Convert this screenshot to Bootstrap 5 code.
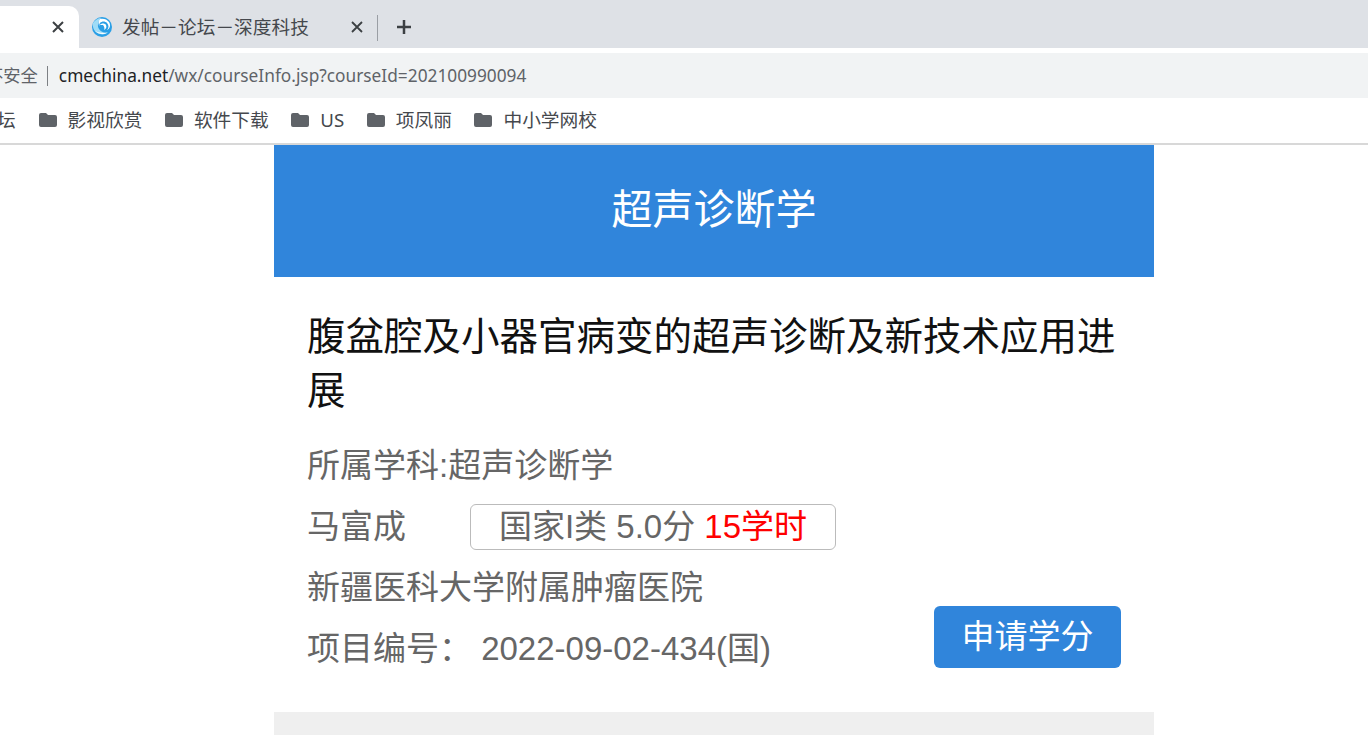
<!DOCTYPE html>
<html lang="zh">
<head>
    <meta charset="UTF-8">
    <title>超声诊断学</title>
    <link href="https://cdn.jsdelivr.net/npm/bootstrap@5.3.2/dist/css/bootstrap.min.css" rel="stylesheet">
    <style>
        html, body { height: 100%; overflow: hidden; }
        body { font-family: "Liberation Sans", "Noto Sans CJK SC", sans-serif; background: #fff; }
        .chrome-ui { font-family: "Noto Sans", "Noto Sans CJK SC", sans-serif; }
        .tabstrip { height: 48px; background: #dee1e6; }
        .tab-active { width: 79px; height: 42px; margin-top: 6px; background: #fff; border-top-right-radius: 10px; padding-right: 15px; }
        .tab-other { width: 298px; height: 42px; margin-top: 6px; padding-left: 13px; padding-right: 14px; font-size: 18.7px; color: #45484d; }
        .tab-other span { margin-left: 10px; }
        .tab-sep { width: 1px; height: 26px; background: #9a9ea4; margin-top: 15px; }
        .tab-plus { margin: 6px 0 0 18px; height: 42px; }
        .gapline { height: 5px; background: #fff; }
        .addressbar { height: 45px; background: #f1f3f4; font-size: 17.3px; color: #5f6368; white-space: nowrap; overflow: hidden; }
        .addr-lock { margin-left: -14px; }
        .addr-bar { width: 1px; height: 20px; background: #7d8084; margin: 0 11px 0 9px; }
        .addr-host { color: #202124; }
        .bookmarks { height: 45px; background: #fff; font-size: 18.7px; color: #45484d; white-space: nowrap; overflow: hidden; }
        .bm-cut { margin-left: -3px; width: 19px; overflow: hidden; }
        .bm-item { margin-left: 22.6px; gap: 11px; }
        .bm-item svg { flex: none; }
        .chrome-edge { height: 2px; background: #d8d8d8; }
        .course-wrap { width: 880px; margin-left: 274px; }
        .course-head { height: 132px; background: #3085db; color: #fff; font-size: 41px; }
        .course-body { padding: 33px 33px 0; height: 435px; }
        .course-name { font-size: 38.5px; line-height: 54px; color: #111; margin: 0; font-weight: 400; }
        .info-line { font-size: 33px; line-height: 61px; color: #666; margin: 0; height: 61px; white-space: nowrap; }
        .first-info { margin-top: 17px; }
        .doc-name { width: 163px; }
        .credit-box { width: 366px; height: 46px; border: 1px solid #bbb; border-radius: 6px; line-height: 44px; }
        .credit-hours { color: #f00; }
        .apply-btn { width: 187px; height: 62px; background: #3085db; color: #fff; font-size: 33px; border-radius: 6px; border: 0; padding: 0; margin-top: -12px; }
        .apply-btn:hover { background: #3085db; color: #fff; }
        .foot-band { height: 23px; background: #efefef; }
    </style>
</head>
<body>
    <div class="chrome-ui">
        <div class="tabstrip d-flex">
            <div class="tab-active d-flex align-items-center justify-content-end">
                <svg width="12" height="12" viewBox="0 0 12 12"><path d="M1 1 11 11M11 1 1 11" stroke="#3c4043" stroke-width="2" fill="none"/></svg>
            </div>
            <div class="tab-other d-flex align-items-center">
                <svg width="20" height="20" viewBox="0 0 20 20">
                    <circle cx="10" cy="10" r="10" fill="#2a9fe6"/>
                    <path d="M1 6C0 11 3 16 8 17c3 1 6 0 8-2-4 1-7 0-9-3C5 9 6 4 9 1 6 1 3 3 1 6z" fill="#9fdcf7"/>
                    <path d="M8 2c3-1 7 0 9 3 2 3 1 7-2 8 2-2 2-5 0-7-2-2-5-2-7 0-1 1-1 3 0 4-2-2-2-6 0-8z" fill="#fff"/>
                    <path d="M3 14c3 3 8 4 12 2-4 0-8 0-12-2z" fill="#fff"/>
                    <path d="M8 8c1-2 5-2 6 0 1 2 0 4-2 5 1-2 0-4-1-5-1 0-2 0-3 0z" fill="#fff"/>
                </svg>
                <span>发帖－论坛－深度科技</span>
                <svg class="ms-auto" width="12" height="12" viewBox="0 0 12 12"><path d="M1 1 11 11M11 1 1 11" stroke="#3c4043" stroke-width="1.8" fill="none"/></svg>
            </div>
            <div class="tab-sep"></div>
            <div class="tab-plus d-flex align-items-center">
                <svg width="16" height="16" viewBox="0 0 16 16"><path d="M8 1V15M1 8H15" stroke="#3c4043" stroke-width="2.5" fill="none"/></svg>
            </div>
        </div>
        <div class="gapline"></div>
        <div class="addressbar d-flex align-items-center">
            <span class="addr-lock">不安全</span>
            <span class="addr-bar"></span>
            <span><span class="addr-host">cmechina.net</span>/wx/courseInfo.jsp?courseId=202100990094</span>
        </div>
        <div class="bookmarks d-flex align-items-center">
            <span class="bm-cut d-inline-block">坛</span>
            <div class="bm-item d-flex align-items-center">
                <svg width="18" height="14" viewBox="0 0 18 14"><path d="M2 0H7L9 2H16a2 2 0 0 1 2 2V12a2 2 0 0 1-2 2H2a2 2 0 0 1-2-2V2a2 2 0 0 1 2-2z" fill="#5f6368"/></svg>
                <span>影视欣赏</span>
            </div>
            <div class="bm-item d-flex align-items-center">
                <svg width="18" height="14" viewBox="0 0 18 14"><path d="M2 0H7L9 2H16a2 2 0 0 1 2 2V12a2 2 0 0 1-2 2H2a2 2 0 0 1-2-2V2a2 2 0 0 1 2-2z" fill="#5f6368"/></svg>
                <span>软件下载</span>
            </div>
            <div class="bm-item d-flex align-items-center">
                <svg width="18" height="14" viewBox="0 0 18 14"><path d="M2 0H7L9 2H16a2 2 0 0 1 2 2V12a2 2 0 0 1-2 2H2a2 2 0 0 1-2-2V2a2 2 0 0 1 2-2z" fill="#5f6368"/></svg>
                <span>US</span>
            </div>
            <div class="bm-item d-flex align-items-center">
                <svg width="18" height="14" viewBox="0 0 18 14"><path d="M2 0H7L9 2H16a2 2 0 0 1 2 2V12a2 2 0 0 1-2 2H2a2 2 0 0 1-2-2V2a2 2 0 0 1 2-2z" fill="#5f6368"/></svg>
                <span>项凤丽</span>
            </div>
            <div class="bm-item d-flex align-items-center">
                <svg width="18" height="14" viewBox="0 0 18 14"><path d="M2 0H7L9 2H16a2 2 0 0 1 2 2V12a2 2 0 0 1-2 2H2a2 2 0 0 1-2-2V2a2 2 0 0 1 2-2z" fill="#5f6368"/></svg>
                <span>中小学网校</span>
            </div>
        </div>
        <div class="chrome-edge"></div>
    </div>

    <main class="course-wrap">
        <header class="course-head d-flex align-items-center justify-content-center">超声诊断学</header>
        <section class="course-body">
            <h1 class="course-name">腹盆腔及小器官病变的超声诊断及新技术应用进展</h1>
            <p class="info-line first-info">所属学科:超声诊断学</p>
            <div class="info-line d-flex align-items-center">
                <span class="doc-name">马富成</span>
                <span class="credit-box d-flex align-items-center justify-content-center">国家I类 5.0分&nbsp;<span class="credit-hours">15学时</span></span>
            </div>
            <p class="info-line">新疆医科大学附属肿瘤医院</p>
            <div class="info-line d-flex justify-content-between align-items-start">
                <span>项目编号： 2022-09-02-434(国)</span>
                <a class="btn apply-btn d-flex align-items-center justify-content-center" href="#">申请学分</a>
            </div>
        </section>
        <div class="foot-band"></div>
    </main>

    <script src="https://cdn.jsdelivr.net/npm/bootstrap@5.3.2/dist/js/bootstrap.bundle.min.js"></script>
</body>
</html>
